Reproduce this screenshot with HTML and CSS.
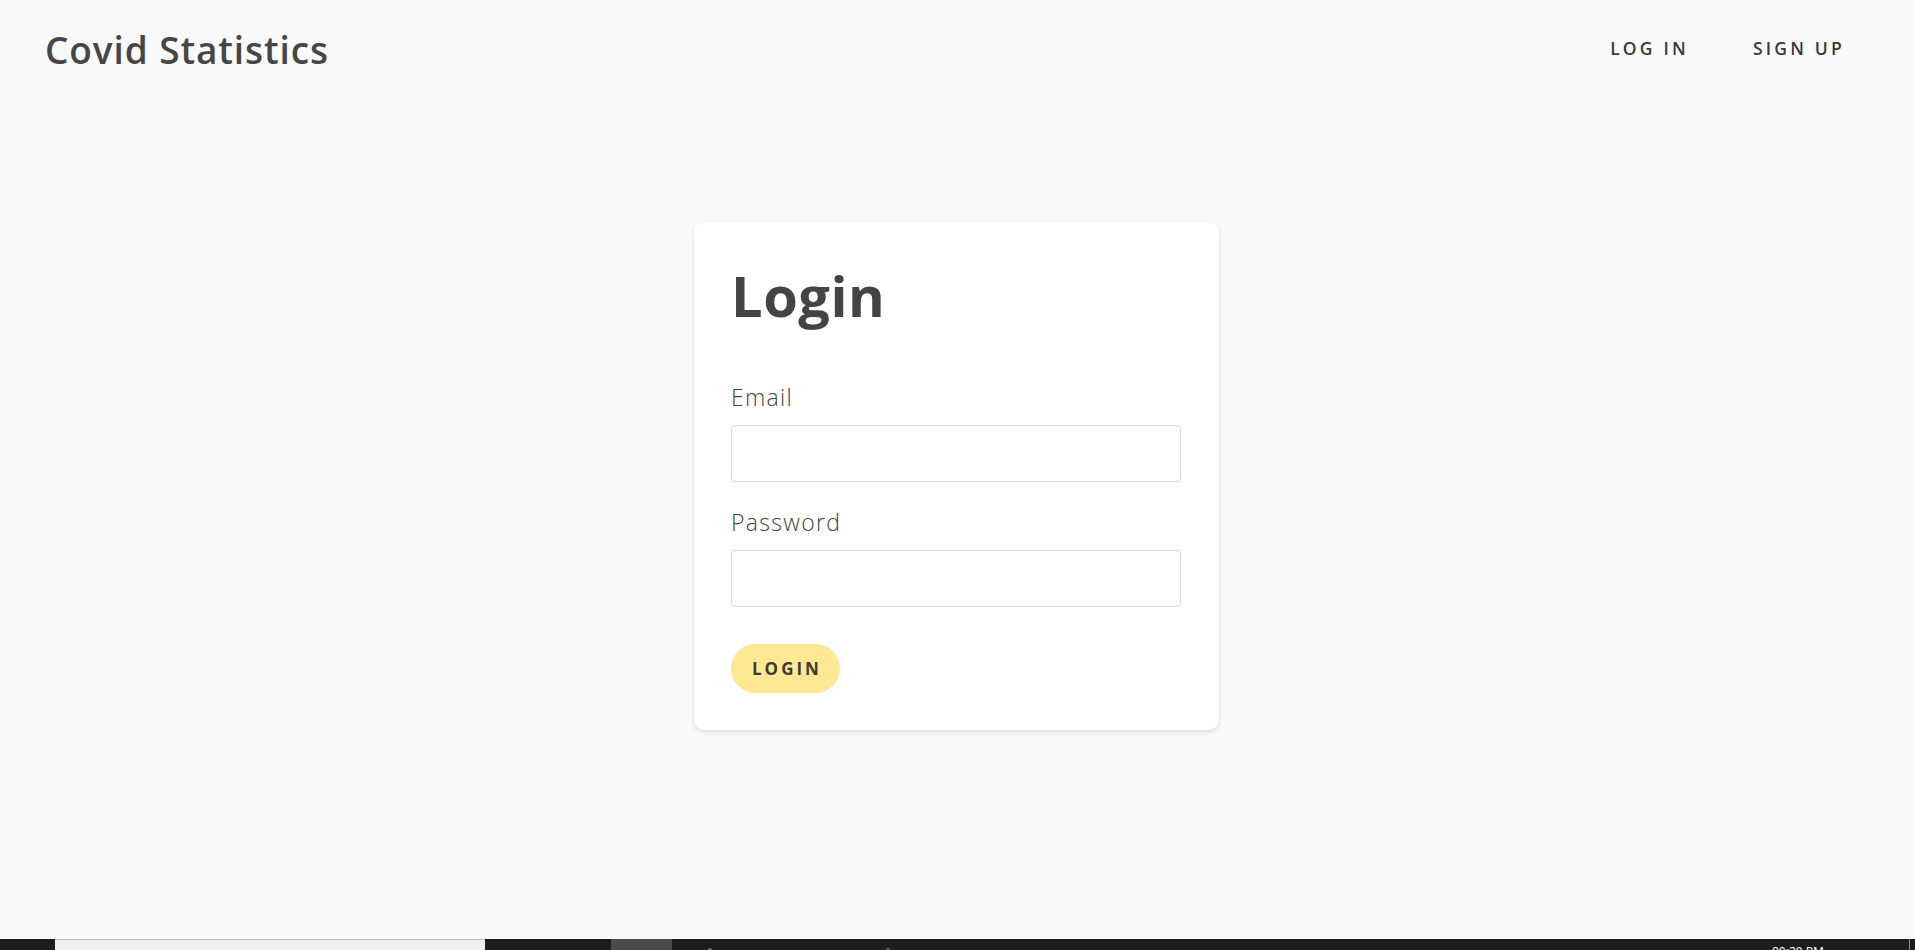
FILE: index.html
```html
<!DOCTYPE html>
<html lang="en">
<head>
    <meta charset="UTF-8">
    <meta name="viewport" content="width=device-width, initial-scale=1.0">
    <title>Covid Statistics - Login</title>
    <link rel="stylesheet" href="styles.css">
</head>
<body>
    <header class="topbar">
        <div class="brand">Covid Statistics</div>
        <nav class="nav">
            <a href="#" class="nav-link">Log in</a>
            <a href="#" class="nav-link">Sign up</a>
        </nav>
    </header>

    <main class="main">
        <div class="card">
            <h1>Login</h1>
            <div class="form-group">
                <label for="email">Email</label>
                <input type="email" id="email">
            </div>
            <div class="form-group">
                <label for="password">Password</label>
                <input type="password" id="password">
            </div>
            <button class="btn">Login</button>
        </div>
    </main>

    <!-- bottom of the desktop taskbar, cut off by the screenshot -->
    <div class="taskbar">
        <div class="tb-start"></div>
        <div class="tb-search"></div>
        <div class="tb-gap"></div>
        <div class="tb-active"></div>
        <div class="tb-icons">
            <span class="tb-dot teal"></span>
            <span class="tb-dot pink"></span>
        </div>
        <div class="tb-clock">00:20 PM</div>
        <div class="tb-edge"></div>
    </div>
</body>
</html>
```

FILE: styles.css
```css
html, body {
    height: 100%;
}
body {
    font-family: "Open Sans", "Liberation Sans", sans-serif;
    margin: 0;
    background-color: #fafafa;
    color: #444;
    display: flex;
    flex-direction: column;
    overflow: hidden;
}
.topbar {
    height: 96px;
    display: flex;
    align-items: center;
    justify-content: space-between;
    padding: 0 70px 0 45px;
    flex-shrink: 0;
}
.brand {
    font-size: 37px;
    font-weight: 600;
    letter-spacing: 0.9px;
    color: #464646;
    margin-top: 2px;
}
.nav {
    display: flex;
    gap: 64px;
}
.nav-link {
    font-size: 17.5px;
    font-weight: 600;
    letter-spacing: 3.2px;
    text-transform: uppercase;
    color: #3a3a3a;
    text-decoration: none;
}
.main {
    flex: 1;
    display: flex;
    justify-content: center;
    align-items: flex-start;
    padding-top: 126px;
}
.card {
    width: 525px;
    box-sizing: border-box;
    margin-right: 2px;
    background: white;
    border-radius: 10px;
    box-shadow: 0 2px 5px rgba(0,0,0,0.12);
    padding: 40px 38px 37px 37px;
}
.card h1 {
    margin: 0 0 50px;
    font-size: 56px;
    line-height: 67px;
    font-weight: 700;
    letter-spacing: 0.5px;
    color: #444;
}
.form-group {
    margin-bottom: 22px;
}
.form-group label {
    display: block;
    font-size: 23px;
    line-height: 36px;
    font-weight: 300;
    letter-spacing: 1.3px;
    color: #454545;
    margin-bottom: 10px;
}
.form-group input {
    display: block;
    width: 100%;
    height: 57px;
    box-sizing: border-box;
    border: 1px solid #dcdcdc;
    border-radius: 4px;
    padding: 10px 14px;
    font-size: 18px;
    font-family: inherit;
    background: white;
}
.btn {
    margin-top: 15px;
    height: 49px;
    padding: 0 18px 0 21px;
    border: none;
    border-radius: 25px;
    background-color: #ffe894;
    color: #3d3a33;
    font-family: inherit;
    font-size: 17px;
    font-weight: 700;
    letter-spacing: 3px;
    text-transform: uppercase;
    cursor: pointer;
}
.taskbar {
    height: 11px;
    flex-shrink: 0;
    display: flex;
    background: #1d1d1d;
    overflow: hidden;
}
.tb-start {
    width: 55px;
}
.tb-search {
    width: 430px;
    background: #f0f0f0;
    border-top: 1px solid #bcbcbc;
    box-sizing: border-box;
}
.tb-gap {
    width: 126px;
}
.tb-active {
    width: 61px;
    background: #4b4b4b;
}
.tb-icons {
    width: 1100px;
    position: relative;
}
.tb-dot {
    position: absolute;
    bottom: 0;
    width: 4px;
    height: 2px;
    border-radius: 2px 2px 0 0;
}
.tb-dot.teal {
    left: 36px;
    background: #2f8ea3;
}
.tb-dot.pink {
    left: 214px;
    background: #b04a5c;
}
.tb-clock {
    flex: 1;
    color: white;
    font-family: "Noto Sans", sans-serif;
    font-size: 12px;
    line-height: 12px;
    padding-top: 7px;
    white-space: nowrap;
}
.tb-edge {
    width: 5px;
    border-left: 1px solid #8a8a8a;
}
```
